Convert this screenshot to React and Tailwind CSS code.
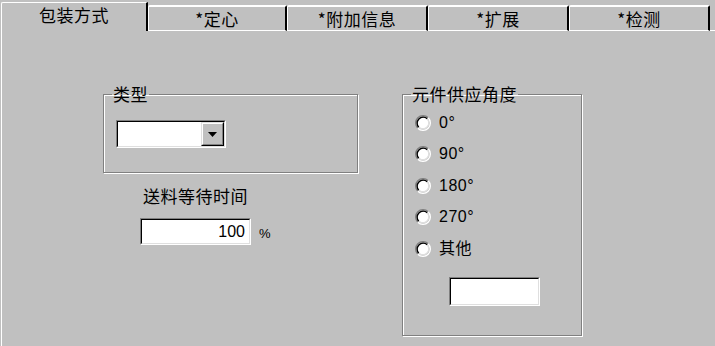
import React from "react";

const tabs = ["包装方式", "*定心", "*附加信息", "*扩展", "*检测"];
const tabWidths = ["w-[139px]", "w-[141px]", "w-[141px]", "w-[141px]"];
const angles = ["0°", "90°", "180°", "270°", "其他"];

// classic sunken edit box
function Sunken({ className, children }) {
  return (
    <div className={`border border-t-[#808080] border-l-[#808080] border-r-white border-b-white ${className}`}>
      <div className="w-full h-full border border-t-black border-l-black border-r-[#dfdfdf] border-b-[#dfdfdf] bg-white flex items-center">
        {children}
      </div>
    </div>
  );
}

function Radio() {
  return (
    <svg width="16" height="16" viewBox="0 0 12 12">
      <circle cx="6" cy="6" r="4.2" fill="white" />
      <path d="M2.11 9.89 A5.5 5.5 0 0 1 9.89 2.11" stroke="#808080" strokeWidth="1" fill="none" />
      <path d="M9.89 2.11 A5.5 5.5 0 0 1 2.11 9.89" stroke="white" strokeWidth="1" fill="none" />
      <path d="M2.82 9.18 A4.5 4.5 0 0 1 9.18 2.82" stroke="black" strokeWidth="1" fill="none" />
      <path d="M9.18 2.82 A4.5 4.5 0 0 1 2.82 9.18" stroke="#dfdfdf" strokeWidth="1" fill="none" />
    </svg>
  );
}

export default function App() {
  return (
    <div className="w-[715px] h-[346px] bg-[#c0c0c0] overflow-hidden text-black font-['Noto_Sans_CJK_SC',sans-serif] text-[17px] tracking-[0.5px] leading-[20px]">
      {/* tab strip */}
      <div className="flex items-end h-[31px]">
        <div className="w-[147px] h-[29px] ml-[1px] border-l border-t border-l-white border-t-white border-r-2 border-r-black rounded-tl-[2px] flex justify-center pt-[2px]">
          {tabs[0]}
        </div>
        {tabs.slice(1).map((t, i) => (
          <div
            key={t}
            className={`${tabWidths[i]} h-[26px] border-t-2 border-l border-b border-t-white border-l-white border-b-white border-r-2 border-r-black rounded-t-[2px] flex justify-center pt-[2px]`}
          >
            {t}
          </div>
        ))}
        <div className="flex-1 h-[1px] bg-white" />
      </div>

      {/* page */}
      <div className="h-[315px] ml-[1px] border-l border-l-white flex items-start">
        <div className="ml-[101px] mt-[53px] flex flex-col">
          <fieldset className="w-[255px] h-[89px] border border-[#808080] shadow-[inset_1px_1px_0_white,1px_1px_0_white] pl-[12px]">
            <legend className="-ml-[4px] px-[1px]">类型</legend>
            <Sunken className="mt-[16px] w-[110px] h-[28px]">
              <div className="flex-1" />
              <div className="w-[23px] h-full border border-t-[#dfdfdf] border-l-[#dfdfdf] border-r-black border-b-black bg-[#c0c0c0]">
                <div className="w-full h-full border border-t-white border-l-white border-r-[#808080] border-b-[#808080] flex items-center justify-center">
                  <svg width="9" height="5" viewBox="0 0 9 5">
                    <path d="M0 0 H9 L4.5 5 Z" fill="black" />
                  </svg>
                </div>
              </div>
            </Sunken>
          </fieldset>
          <div className="ml-[40px] mt-[13px]">送料等待时间</div>
          <div className="flex items-center mt-[12px] ml-[37px]">
            <Sunken className="w-[111px] h-[27px]">
              <span className="flex-1 text-right pr-[4px] tracking-normal font-['Liberation_Sans',sans-serif] text-[16px]">100</span>
            </Sunken>
            <span className="ml-[8px] mt-[4px] text-[13px] tracking-normal font-['Liberation_Sans',sans-serif]">%</span>
          </div>
        </div>

        <fieldset className="ml-[44px] mt-[53px] w-[180px] h-[252px] border border-[#808080] shadow-[inset_1px_1px_0_white,1px_1px_0_white] pl-[12px]">
          <legend className="-ml-[4px] px-[1px]">元件供应角度</legend>
          <div className="mt-[3px] flex flex-col">
            {angles.map((a) => (
              <div key={a} className="h-[31.5px] flex items-center">
                <Radio />
                <span className="ml-[8px] font-['Liberation_Sans','Noto_Sans_CJK_SC',sans-serif] text-[16px]">{a}</span>
              </div>
            ))}
          </div>
          <Sunken className="ml-[34px] mt-[12px] w-[91px] h-[29px]" />
        </fieldset>
      </div>
    </div>
  );
}
